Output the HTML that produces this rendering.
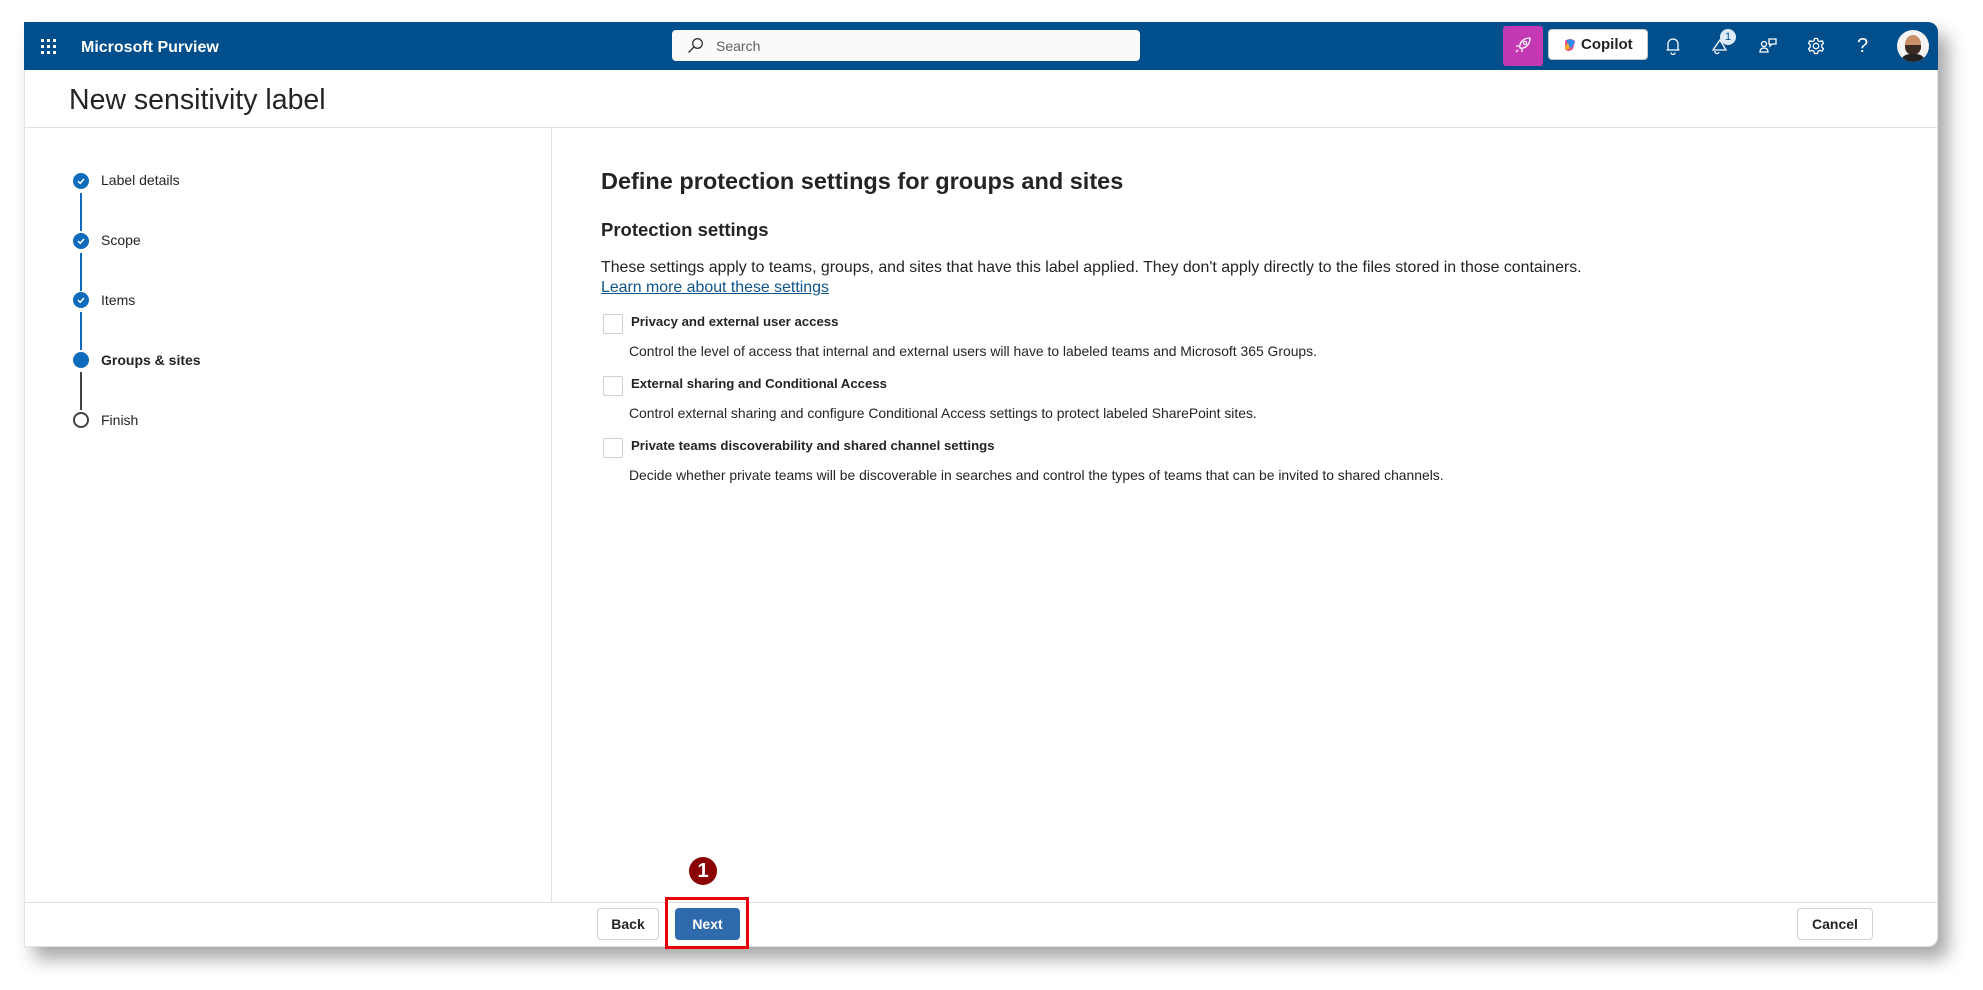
<!DOCTYPE html>
<html><head><meta charset="utf-8">
<style>
*{box-sizing:border-box;margin:0;padding:0}
body{width:1983px;height:990px;background:#fff;font-family:"Liberation Sans",Arial,sans-serif;color:#242424;position:relative;overflow:hidden}
.frame{position:absolute;left:24px;top:22px;width:1914px;height:925px;background:#fff;border:1px solid #e3e3e3;border-radius:0 10px 10px 0;box-shadow:10px 12px 18px rgba(0,0,0,.35)}
.hdr{position:absolute;left:24px;top:22px;width:1914px;height:48px;background:#004e8c;border-radius:0 10px 0 0}
.abs{position:absolute}
.step{position:absolute;left:73px;width:16px;height:16px;border-radius:50%;background:#0f6cbd}
.step svg{position:absolute;left:3px;top:3px}
.lbl{position:absolute;left:101px;font-size:14px;color:#242424}
.vl{position:absolute;left:80px;width:2px;height:38px;background:#0f6cbd}
.cb{position:absolute;left:603px;width:20px;height:20px;border:1px solid #d0d0d0;border-radius:2px;background:#fff}
.t{position:absolute;left:631px;font-size:13.2px;font-weight:bold;color:#242424}
.d{position:absolute;left:629px;font-size:13.9px;color:#242424}
.btn{position:absolute;top:908px;height:32px;border:1px solid #d1d1d1;border-radius:4px;background:#fff;font-size:14px;font-weight:bold;display:flex;align-items:center;justify-content:center;color:#242424}
</style></head><body>
<div class="frame"></div>
<div class="hdr"></div>
<svg class="abs" style="left:40px;top:38px" width="18" height="18" viewBox="0 0 18 18" fill="#fff">
<rect x="1" y="1" width="3" height="3"/><rect x="7" y="1" width="3" height="3"/><rect x="13" y="1" width="3" height="3"/>
<rect x="1" y="7" width="3" height="3"/><rect x="7" y="7" width="3" height="3"/><rect x="13" y="7" width="3" height="3"/>
<rect x="1" y="13" width="3" height="3"/><rect x="7" y="13" width="3" height="3"/><rect x="13" y="13" width="3" height="3"/></svg>
<div class="abs" style="left:81px;top:39px;font-size:16px;font-weight:bold;color:#fff">Microsoft Purview</div>
<div class="abs" style="left:672px;top:30px;width:468px;height:31px;background:#fafafa;border-radius:4px"></div>
<svg class="abs" style="left:687px;top:37px" width="17" height="17" viewBox="0 0 17 17" fill="none" stroke="#333" stroke-width="1.3"><circle cx="10.5" cy="6.5" r="4.8"/><path d="M7 10 L1.5 15.5"/></svg>
<div class="abs" style="left:716px;top:38px;font-size:14px;color:#616161">Search</div>
<div class="abs" style="left:1503px;top:26px;width:40px;height:40px;background:#c239b3;border-radius:3px"></div>
<svg class="abs" style="left:1514px;top:36px" width="18" height="18" viewBox="0 0 18 18" fill="none" stroke="#fff" stroke-width="1.3"><path d="M6 12 C5 7 9 2 16 2 C16 9 11 13 6 12Z"/><circle cx="11" cy="7" r="1.6"/><path d="M5 10 L2 10 M8 13 L8 16 M4 14 L2 16"/></svg>
<div class="abs" style="left:1548px;top:29px;width:100px;height:31px;background:#fff;border:1px solid #c8c8c8;border-radius:4px"></div>
<svg class="abs" style="left:1563px;top:38px" width="14" height="14" viewBox="0 0 14 14"><path d="M2 3 Q7 -1 12 3 L10 11 Q5 15 2 11Z" fill="#e84c8a"/><path d="M4 2 Q9 0 12 4 L9 9 Q6 11 4 8Z" fill="#2d8cf0"/><path d="M2 8 L5 5 L7 10 Q4 13 2 11Z" fill="#f5a623"/></svg>
<div class="abs" style="left:1581px;top:36px;font-size:15px;font-weight:bold;color:#242424">Copilot</div>
<svg class="abs" style="left:1665px;top:37px" width="16" height="18" viewBox="0 0 16 18" fill="none" stroke="#fff" stroke-width="1.3"><path d="M3 13 L3 7 A5 5 0 0 1 13 7 L13 13 Z M1.5 13 L14.5 13 M6 15.5 A2 2 0 0 0 10 15.5"/></svg>
<svg class="abs" style="left:1710px;top:36px" width="20" height="20" viewBox="0 0 20 20" fill="none" stroke="#fff" stroke-width="1.3"><path d="M3 14 L10 4 L16 14 Z M5 15 A2 2 0 0 0 9 16"/></svg>
<div class="abs" style="left:1720px;top:29px;width:16px;height:16px;border-radius:50%;background:#deecf9;color:#004e8c;font-size:11px;text-align:center;line-height:16px">1</div>
<svg class="abs" style="left:1759px;top:37px" width="20" height="18" viewBox="0 0 20 18" fill="none" stroke="#fff" stroke-width="1.3"><circle cx="5" cy="7" r="2.5"/><path d="M1 15 Q1 11 5 11 Q9 11 9 15 Z"/><path d="M10 2 L17 2 L17 7 L13 7 L11 9 L11 7 L10 7Z"/></svg>
<svg class="abs" style="left:1807px;top:37px" width="18" height="18" viewBox="0 0 18 18" fill="none" stroke="#fff" stroke-width="1.3"><circle cx="9" cy="9" r="2.7"/><path d="M7.5 1.5 L10.5 1.5 L11 3.7 L13 4.7 L15 3.7 L16.5 6.2 L14.8 7.8 L14.8 10.2 L16.5 11.8 L15 14.3 L13 13.3 L11 14.3 L10.5 16.5 L7.5 16.5 L7 14.3 L5 13.3 L3 14.3 L1.5 11.8 L3.2 10.2 L3.2 7.8 L1.5 6.2 L3 3.7 L5 4.7 L7 3.7 Z"/></svg>
<div class="abs" style="left:1857px;top:35px;font-size:20px;color:#fff">?</div>
<div class="abs" style="left:1897px;top:30px;width:32px;height:32px;border-radius:50%;background:#f4f4f4;overflow:hidden">
<div class="abs" style="left:8px;top:5px;width:16px;height:19px;border-radius:50%;background:#c98f6a"></div>
<div class="abs" style="left:8px;top:15px;width:16px;height:10px;border-radius:0 0 8px 8px;background:#3a2a20"></div>
<div class="abs" style="left:3px;top:24px;width:26px;height:12px;border-radius:10px 10px 0 0;background:#222"></div></div>

<div class="abs" style="left:69px;top:84px;font-size:28.5px;color:#242424">New sensitivity label</div>
<div class="abs" style="left:25px;top:127px;width:1912px;height:1px;background:#e0e0e0"></div>
<div class="abs" style="left:551px;top:128px;width:1px;height:774px;background:#e0e0e0"></div>
<div class="abs" style="left:25px;top:902px;width:1912px;height:1px;background:#e0e0e0"></div>

<div class="step" style="top:173px"><svg width="10" height="10" viewBox="0 0 10 10"><path d="M2 5.2 L4.2 7.3 L8 3" fill="none" stroke="#fff" stroke-width="1.5"/></svg></div>
<div class="vl" style="top:193px"></div>
<div class="step" style="top:233px"><svg width="10" height="10" viewBox="0 0 10 10"><path d="M2 5.2 L4.2 7.3 L8 3" fill="none" stroke="#fff" stroke-width="1.5"/></svg></div>
<div class="vl" style="top:253px"></div>
<div class="step" style="top:292px"><svg width="10" height="10" viewBox="0 0 10 10"><path d="M2 5.2 L4.2 7.3 L8 3" fill="none" stroke="#fff" stroke-width="1.5"/></svg></div>
<div class="vl" style="top:312px"></div>
<div class="step" style="top:352px"></div>
<div class="vl" style="top:372px;background:#424242"></div>
<div class="step" style="top:412px;background:#fff;border:2px solid #424242"></div>
<div class="lbl" style="top:172px">Label details</div>
<div class="lbl" style="top:232px">Scope</div>
<div class="lbl" style="top:292px">Items</div>
<div class="lbl" style="top:352px;font-weight:bold">Groups &amp; sites</div>
<div class="lbl" style="top:412px">Finish</div>

<div class="abs" style="left:601px;top:168px;font-size:23.5px;font-weight:bold">Define protection settings for groups and sites</div>
<div class="abs" style="left:601px;top:219px;font-size:18.5px;font-weight:bold">Protection settings</div>
<div class="abs" style="left:601px;top:259px;font-size:15.9px">These settings apply to teams, groups, and sites that have this label applied. They don't apply directly to the files stored in those containers.</div>
<div class="abs" style="left:601px;top:279px;font-size:15.9px;color:#0f548c;text-decoration:underline">Learn more about these settings</div>
<div class="cb" style="top:314px"></div><div class="t" style="top:314px">Privacy and external user access</div>
<div class="d" style="top:343px">Control the level of access that internal and external users will have to labeled teams and Microsoft 365 Groups.</div>
<div class="cb" style="top:376px"></div><div class="t" style="top:376px">External sharing and Conditional Access</div>
<div class="d" style="top:405px">Control external sharing and configure Conditional Access settings to protect labeled SharePoint sites.</div>
<div class="cb" style="top:438px"></div><div class="t" style="top:438px">Private teams discoverability and shared channel settings</div>
<div class="d" style="top:467px">Decide whether private teams will be discoverable in searches and control the types of teams that can be invited to shared channels.</div>

<div class="abs" style="left:689px;top:857px;width:28px;height:28px;border-radius:50%;background:#8b0000;color:#fff;font-weight:bold;font-size:20px;text-align:center;line-height:28px">1</div>
<div class="btn" style="left:597px;width:62px">Back</div>
<div class="btn" style="left:675px;width:65px;background:#2f6aad;border-color:#2f6aad;color:#fff">Next</div>
<div class="abs" style="left:665px;top:897px;width:84px;height:52px;border:3px solid #e8000b"></div>
<div class="btn" style="left:1797px;width:76px">Cancel</div>
</body></html>
